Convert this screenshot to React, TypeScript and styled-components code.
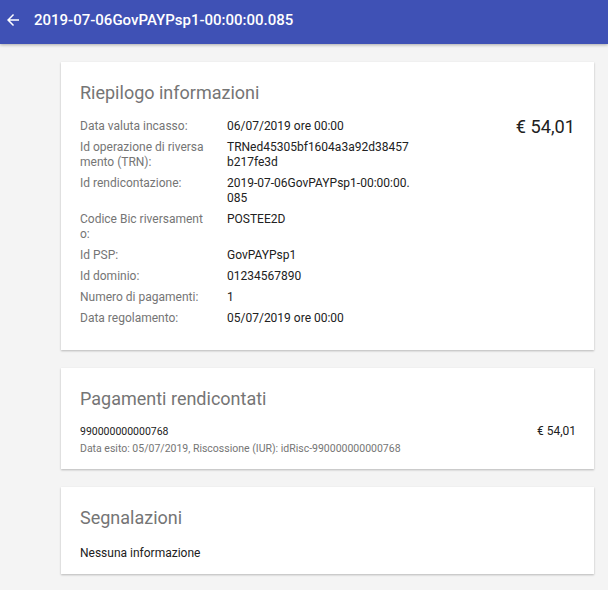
import React from "react";
import styled, {createGlobalStyle} from "styled-components";

const GlobalStyle = createGlobalStyle`
  html, body {
    margin: 0;
    padding: 0;
    height: 100%;
    overflow: hidden;
    background-color: #f4f4f4;
    font-family: Roboto, "Liberation Sans", sans-serif;
  }
`

const Header = styled.header`
  box-sizing: border-box;
  display: flex;
  align-items: center;
  height: 44px;
  padding: 0 0 4px 4px;
  gap: 12px;

  background-color: #3f51b5;
  color: #fff;
  box-shadow: 0 1px 3px rgba(0, 0, 0, 0.3);
`

const BackIcon = styled.svg`
  width: 18px;
  height: 18px;
  fill: #fff;
`

const Title = styled.h1`
  margin: 0;
  font-size: 15px;
  font-weight: 500;
`

const Content = styled.main`
  display: flex;
  flex-direction: column;
  gap: 18px;
  padding: 18px 14px 0 61px;
`

const Card = styled.section<{$height: number}>`
  box-sizing: border-box;
  height: ${p => p.$height}px;
  padding: 20px 19px 0;

  background-color: #fff;
  box-shadow: 0 1px 2px rgba(0, 0, 0, 0.25);
`

const CardTitle = styled.h2<{$gap: number}>`
  margin: 0 0 ${p => p.$gap}px;
  font-size: 18px;
  line-height: 22px;
  font-weight: 400;
  color: #757575;
`

const SummaryBody = styled.div`
  display: flex;
  justify-content: space-between;
  align-items: flex-start;
`

const InfoList = styled.dl`
  display: grid;
  grid-template-columns: 147px 186px;
  row-gap: 6px;
  margin: 0;
  font-size: 12px;
  line-height: 15px;
`

const InfoLabel = styled.dt`
  color: #757575;
  word-break: break-all;
  padding-right: 20px;
`

const InfoValue = styled.dd`
  margin: 0;
  color: #212121;
  word-break: break-all;
`

const TotalAmount = styled.div`
  margin-top: -3px;
  font-size: 18.2px;
  line-height: 22px;
  font-weight: 400;
  color: #212121;
`

const PaymentRow = styled.div`
  display: flex;
  justify-content: space-between;
  align-items: flex-start;
  margin-right: -1px;
`

const PaymentId = styled.div`
  font-size: 10.5px;
  line-height: 15px;
  color: #212121;
`

const PaymentDetail = styled.div`
  margin-top: 2px;
  font-size: 10.5px;
  line-height: 15px;
  color: #757575;
`

const PaymentAmount = styled.div`
  font-size: 12px;
  line-height: 15px;
  color: #212121;
`

const EmptyMessage = styled.p`
  margin: 0;
  font-size: 12px;
  line-height: 15px;
  color: #212121;
`

const infos = [
	['Data valuta incasso:', '06/07/2019 ore 00:00'],
	['Id operazione di riversamento (TRN):', 'TRNed45305bf1604a3a92d38457b217fe3d'],
	['Id rendicontazione:', '2019-07-06GovPAYPsp1-00:00:00.085'],
	['Codice Bic riversamento:', 'POSTEE2D'],
	['Id PSP:', 'GovPAYPsp1'],
	['Id dominio:', '01234567890'],
	['Numero di pagamenti:', '1'],
	['Data regolamento:', '05/07/2019 ore 00:00'],
];

export default function App(): JSX.Element {
	return (
		<>
			<GlobalStyle/>
			<Header>
				<BackIcon viewBox="0 0 24 24">
					<path d="M20 11H7.83l5.59-5.59L12 4l-8 8 8 8 1.41-1.41L7.83 13H20v-2z"/>
				</BackIcon>
				<Title>2019-07-06GovPAYPsp1-00:00:00.085</Title>
			</Header>
			<Content>
				<Card $height={288}>
					<CardTitle $gap={15}>Riepilogo informazioni</CardTitle>
					<SummaryBody>
						<InfoList>
							{infos.map(([label, value]) => (
								<React.Fragment key={label}>
									<InfoLabel>{label}</InfoLabel>
									<InfoValue>{value}</InfoValue>
								</React.Fragment>
							))}
						</InfoList>
						<TotalAmount>€ 54,01</TotalAmount>
					</SummaryBody>
				</Card>
				<Card $height={101}>
					<CardTitle $gap={14}>Pagamenti rendicontati</CardTitle>
					<PaymentRow>
						<div>
							<PaymentId>990000000000768</PaymentId>
							<PaymentDetail>Data esito: 05/07/2019, Riscossione (IUR): idRisc-990000000000768</PaymentDetail>
						</div>
						<PaymentAmount>€ 54,01</PaymentAmount>
					</PaymentRow>
				</Card>
				<Card $height={87}>
					<CardTitle $gap={17}>Segnalazioni</CardTitle>
					<EmptyMessage>Nessuna informazione</EmptyMessage>
				</Card>
			</Content>
		</>
	)
}
